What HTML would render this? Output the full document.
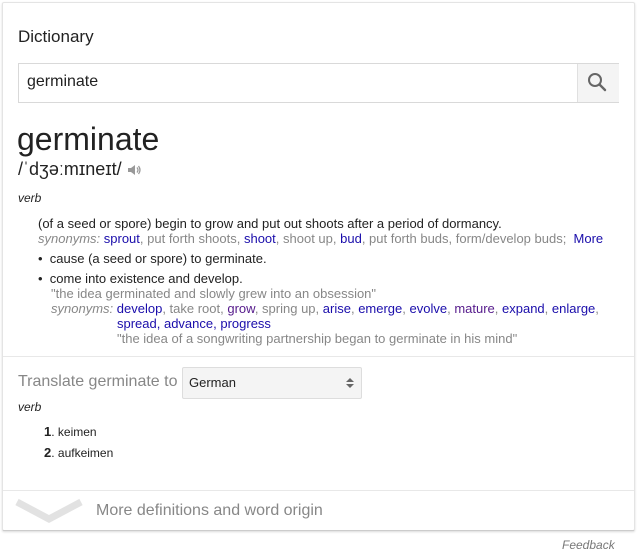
<!DOCTYPE html>
<html><head><meta charset="utf-8"><style>
body{margin:0;width:639px;height:551px;background:#fff;font-family:"Liberation Sans",Arial,sans-serif;position:relative;overflow:hidden}
.a{position:absolute;white-space:nowrap}
.card{position:absolute;left:2px;top:2px;width:631px;height:527px;border:1px solid #e4e4e4;border-bottom-color:#ccc;box-shadow:0 1px 2px rgba(0,0,0,.15);border-radius:2px;background:#fff}
.s{font-size:13px;line-height:15px;color:#222}
.g{color:#878787}
.l{color:#1a0dab}
.v{color:#551a8b}
.i{font-style:italic}
</style></head><body>
<div class="card"></div>
<div class="a" style="left:18px;top:27px;font-size:17px;color:#222">Dictionary</div>
<div class="a" style="left:18px;top:63px;width:599px;height:38px;border:1px solid #d9d9d9;background:#fff"></div>
<div class="a" style="left:577px;top:64px;width:41px;height:38px;background:#f4f4f4;border-left:1px solid #e0e0e0"></div>
<svg class="a" style="left:586px;top:71px" width="22" height="22" viewBox="0 0 22 22"><circle cx="9" cy="9" r="6" fill="none" stroke="#666" stroke-width="2"/><path d="M13.5 13.5L19 19" stroke="#666" stroke-width="2.4" stroke-linecap="round"/></svg>
<div class="a" style="left:27px;top:73px;font-size:16px;color:#222">germinate</div>
<div class="a" style="left:17px;top:121px;font-size:32px;color:#222">germinate</div>
<div class="a" style="left:18px;top:159px;font-size:18px;color:#222">/ˈdʒəːmɪneɪt/</div>
<svg class="a" style="left:126px;top:162px" width="16" height="16" viewBox="0 0 16 16"><path d="M2 6h3l4-3v10l-4-3H2z" fill="#999"/><path d="M11 5.5q2 2.5 0 5M12.5 4q3 4 0 8" stroke="#999" stroke-width="1.3" fill="none"/></svg>
<div class="a s i" style="left:18px;top:191px;font-size:12px">verb</div>
<div class="a s" style="left:38px;top:216px">(of a seed or spore) begin to grow and put out shoots after a period of dormancy.</div>
<div class="a s g" style="left:38px;top:231px"><span class="i">synonyms:</span> <span class="l">sprout</span>, put forth shoots, <span class="l">shoot</span>, shoot up, <span class="l">bud</span>, put forth buds, form/develop buds;&nbsp; <span class="l">More</span></div>
<div class="a s" style="left:38px;top:251px">•&nbsp; cause (a seed or spore) to germinate.</div>
<div class="a s" style="left:38px;top:271px">•&nbsp; come into existence and develop.</div>
<div class="a s g" style="left:51px;top:286px">"the idea germinated and slowly grew into an obsession"</div>
<div class="a s g" style="left:51px;top:301px"><span class="i">synonyms:</span> <span class="l">develop</span>, take root, <span class="v">grow</span>, spring up, <span class="l">arise</span>, <span class="l">emerge</span>, <span class="l">evolve</span>, <span class="v">mature</span>, <span class="l">expand</span>, <span class="l">enlarge</span>,</div>
<div class="a s l" style="left:117px;top:316px">spread, advance, progress</div>
<div class="a s g" style="left:117px;top:331px">"the idea of a songwriting partnership began to germinate in his mind"</div>
<div class="a" style="left:3px;top:356px;width:631px;height:1px;background:#e8e8e8"></div>
<div class="a" style="left:18px;top:373px;font-size:16px;color:#878787">Translate germinate to</div>
<div class="a" style="left:182px;top:367px;width:178px;height:30px;border:1px solid #ddd;border-radius:2px;background:#f4f4f4"></div>
<div class="a" style="left:189px;top:375px;font-size:13px;color:#222">German</div>
<svg class="a" style="left:345px;top:376px" width="10" height="14" viewBox="0 0 10 14"><path d="M1 6L5 2L9 6z M1 8L5 12L9 8z" fill="#666"/></svg>
<div class="a s i" style="left:18px;top:400px;font-size:12px">verb</div>
<div class="a s" style="left:44px;top:424px;font-size:12px"><b style="font-size:13px">1</b>. keimen</div>
<div class="a s" style="left:44px;top:445px;font-size:12px"><b style="font-size:13px">2</b>. aufkeimen</div>
<div class="a" style="left:3px;top:490px;width:631px;height:1px;background:#e8e8e8"></div>
<svg class="a" style="left:14px;top:497px" width="72" height="28" viewBox="0 0 72 28"><path d="M3 5L35 22L67 5" stroke="#e2e2e2" stroke-width="7" fill="none"/></svg>
<div class="a" style="left:96px;top:502px;font-size:16px;color:#878787">More definitions and word origin</div>
<div class="a i" style="left:562px;top:538px;font-size:12px;color:#777">Feedback</div>
</body></html>
